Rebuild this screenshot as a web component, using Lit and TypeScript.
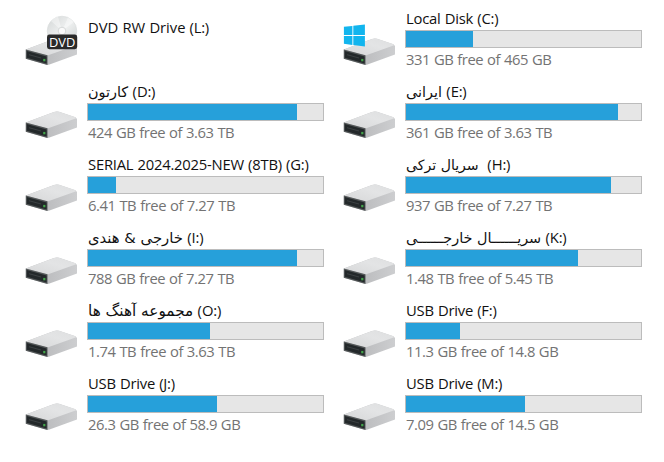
import { LitElement, html, css, svg, nothing } from "lit";
import { customElement, property } from "lit/decorators.js";
import { styleMap } from "lit/directives/style-map.js";

type Kind = "hdd" | "dvd" | "system";

interface Drive {
  name: string;
  letter: string;
  kind?: Kind;
  rtl?: boolean;
  /** Width of the filled part of the bar, in pixels. */
  used?: number;
  free?: string;
  /** Tracking and size used to fit the label. */
  tracking?: number;
  size?: number;
}

const DRIVES: Drive[] = [
  { name: "DVD RW Drive", letter: "(L:)", kind: "dvd", tracking: -0.05 },
  { name: "Local Disk", letter: "(C:)", kind: "system", used: 67, free: "331 GB free of 465 GB" },
  { name: "کارتون", letter: "(D:)", rtl: true, used: 209, free: "424 GB free of 3.63 TB" },
  { name: "ایرانی", letter: "(E:)", rtl: true, used: 212, free: "361 GB free of 3.63 TB" },
  { name: "SERIAL 2024.2025-NEW (8TB)", letter: "(G:)", used: 28, free: "6.41 TB free of 7.27 TB" },
  { name: "سریال ترکی", letter: "\u00a0(H:)", rtl: true, size: 14.1, used: 205, free: "937 GB free of 7.27 TB" },
  { name: "خارجی & هندی", letter: "(I:)", rtl: true, size: 14.8, used: 209, free: "788 GB free of 7.27 TB" },
  { name: "سریــــــال خارجــــــی", letter: "(K:)", rtl: true, used: 172, free: "1.48 TB free of 5.45 TB" },
  { name: "مجموعه آهنگ ها", letter: "(O:)", rtl: true, size: 15.3, used: 122, free: "1.74 TB free of 3.63 TB" },
  { name: "USB Drive", letter: "(F:)", used: 54, free: "11.3 GB free of 14.8 GB" },
  { name: "USB Drive", letter: "(J:)", used: 129, free: "26.3 GB free of 58.9 GB" },
  { name: "USB Drive", letter: "(M:)", used: 119, free: "7.09 GB free of 14.5 GB" },
];

@customElement("drive-icon")
class DriveIcon extends LitElement {
  @property() kind: Kind = "hdd";

  static styles = css`
    :host { display: block; width: 53px; height: 54px; }
    svg { display: block; }
    .dvd { font: 12.5px "Open Sans", "Noto Sans", sans-serif; fill: #fff; }
  `;

  render() {
    return html`<svg width="53" height="54" viewBox="0 0 53 54">
      <defs>
        <linearGradient id="top" x1="0" y1="1" x2="1" y2="0">
          <stop offset="0" stop-color="#d6d7d8" />
          <stop offset="0.6" stop-color="#e3e4e5" />
          <stop offset="1" stop-color="#dedfe0" />
        </linearGradient>
        <linearGradient id="side" x1="0" y1="0" x2="1" y2="0">
          <stop offset="0.4" stop-color="#bcbdbf" />
          <stop offset="1" stop-color="#cdced0" />
        </linearGradient>
        <linearGradient id="disc" x1="0" y1="0" x2="1" y2="1">
          <stop offset="0" stop-color="#d3d6d6" />
          <stop offset="0.5" stop-color="#eef0f0" />
          <stop offset="1" stop-color="#ccd0cf" />
        </linearGradient>
      </defs>
      <path d="M.8 34.6 L29 24 Q31.5 23.2 34 23.8 L50.5 29.2 L52 31 L52 39.6 L24.5 49.5 L22.5 49.9 L.8 43.8 Z" fill="url(#side)" />
      <path d="M.8 34.6 L29 24 Q31.5 23.2 34 23.8 L50.5 29.2 Q51.8 30 50.5 30.6 L22.5 40.6 Z" fill="url(#top)" />
      <path d="M.8 34.4 L22.5 40.2 L22.5 49.9 L.8 43.8 Z" fill="#55595a" />
      <path d="M1.8 36.1 L21.6 41.5 L21.6 48.4 L1.8 42.8 Z" fill="#23282a" />
      <path d="M4 39.7 L16 43" stroke="#3c4143" stroke-width="1" />
      <rect x="18.2" y="43.9" width="2.2" height="2.4" fill="#43a34a" />
      ${this.kind === "dvd"
        ? svg`<circle cx="37" cy="16" r="14.8" fill="url(#disc)" stroke="#d9dcdc" stroke-width=".6" />
            <path d="M37 16 L26 6 A15 15 0 0 1 33 1.6 Z M37 16 L43 2.5 A15 15 0 0 1 49 7 Z" fill="#fff" opacity=".4" />
            <circle cx="37" cy="16" r="3.8" fill="#fafafa" stroke="#cdd0d0" stroke-width=".8" />
            <rect x="22" y="19.6" width="30.2" height="14.6" rx="2.4" fill="#2a2a2a" />
            <text class="dvd" x="24" y="31.6" textLength="26.4" lengthAdjust="spacingAndGlyphs">DVD</text>`
        : nothing}
      ${this.kind === "system"
        ? svg`<path d="M.9 11.8 L9.4 10.9 V20.1 H.9 Z M10.3 10.8 L21.9 9.4 V20.1 H10.3 Z M.9 21 H9.4 V30 L.9 28.8 Z M10.3 21 H21.9 V31.5 L10.3 30.1 Z" fill="#12b5ee" />`
        : nothing}
    </svg>`;
  }
}

@customElement("drive-tile")
class DriveTile extends LitElement {
  @property({ attribute: false }) drive!: Drive;

  static styles = css`
    :host { display: flex; height: 73px; font: 14.8px "Open Sans", "Noto Sans", sans-serif; }
    .icon { padding-top: 13px; width: 62px; flex: none; }
    .body { display: flex; flex-direction: column; width: 237px; flex: none; }
    .label { height: 20px; line-height: 20px; padding: 6px 0 0 1px; margin-bottom: 2px; white-space: pre; color: #111; letter-spacing: -0.22px; word-spacing: 0.5px; }
    .dvd .label { padding-top: 15px; }
    .rtl { font-family: "DejaVu Sans", sans-serif; font-size: 14.4px; letter-spacing: 0; word-spacing: 0; }
    .bar { box-sizing: border-box; height: 18px; border: 1px solid #bcbcbc; background: #e6e6e6; }
    .fill { height: 100%; background: #26a0da; }
    .free { line-height: 20px; padding: 1px 0 0 1px; white-space: pre; color: #737373; letter-spacing: -0.44px; word-spacing: 0.5px; }
  `;

  render() {
    const d = this.drive;
    return html`
      <div class="icon"><drive-icon .kind=${d.kind ?? "hdd"}></drive-icon></div>
      <div class="body ${d.kind ?? "hdd"}">
        <div class="label"><span class=${d.rtl ? "rtl" : "ltr"} style=${styleMap({
          fontSize: d.size ? `${d.size}px` : undefined,
          letterSpacing: d.tracking ? `${d.tracking}px` : undefined,
        })}>${d.name}</span> <span>${d.letter}</span></div>
        ${d.free
          ? html`<div class="bar"><div class="fill" style=${styleMap({ width: `${d.used}px` })}></div></div>
              <div class="free">${d.free}</div>`
          : nothing}
      </div>
    `;
  }
}

@customElement("app-root")
class AppRoot extends LitElement {
  static styles = css`
    :host { display: block; box-sizing: border-box; width: 664px; height: 462px; padding: 2px 0 0 25px; background: #fff; overflow: hidden; }
    .grid { display: grid; grid-template-columns: 318px 300px; }
  `;

  render() {
    return html`<div class="grid">${DRIVES.map((d) => html`<drive-tile .drive=${d}></drive-tile>`)}</div>`;
  }
}
